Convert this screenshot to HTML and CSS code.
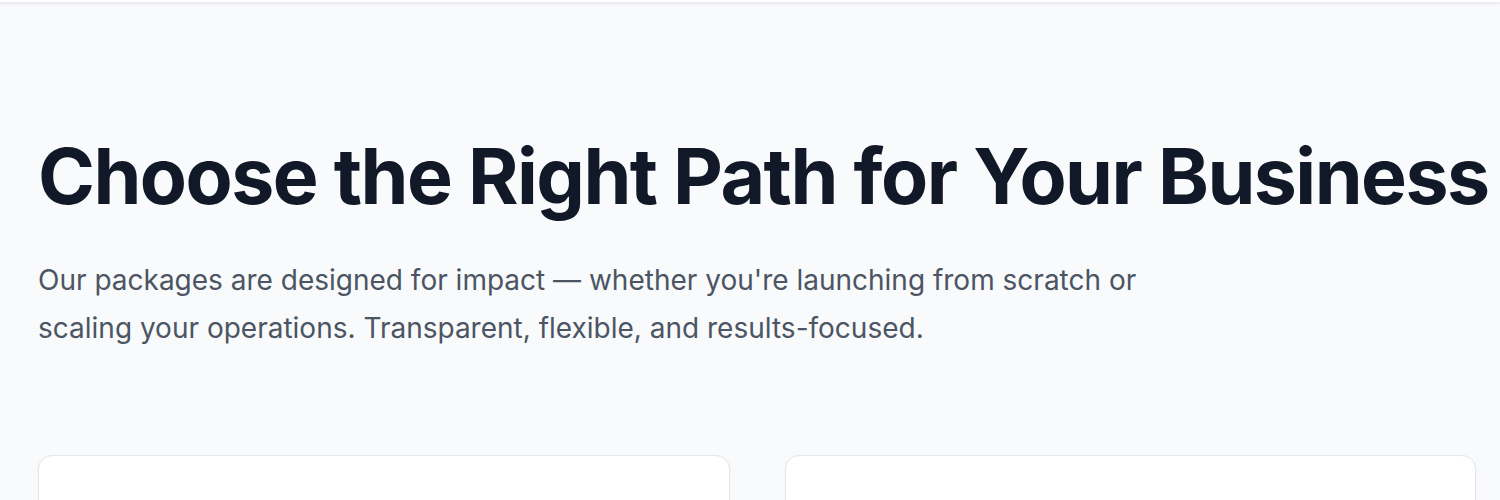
FILE: index.html
```html
<!DOCTYPE html>
<html lang="en">
<head>
  <meta charset="UTF-8" />
  <title>Packages</title>
  <meta name="viewport" content="width=device-width, initial-scale=1.0"/>
  <link rel="stylesheet" href="styles.css">
</head>
<body>

<header class="topbar"></header>

<section class="packages">
  <h1>Choose the Right Path for Your Business</h1>
  <p class="lead">Our packages are designed for impact — whether you're launching from scratch or scaling your operations. Transparent, flexible, and results-focused.</p>

  <div class="cards">
    <div class="card"></div>
    <div class="card"></div>
  </div>
</section>

</body>
</html>
```

FILE: styles.css
```css
* { box-sizing: border-box; }

body {
  margin: 0;
  font-family: Inter, 'Noto Sans', sans-serif;
  background: #f9fafb;
  color: #111827;
}

.topbar {
  height: 3px;
  background: white;
  box-shadow: 0 1px 3px rgba(0,0,0,0.08);
  border-bottom: 1px solid #eceef1;
}

.packages {
  width: 1438px;
  margin-left: 38px;
  padding-top: 131px;
}

h1 {
  margin: 0;
  font-size: 77px;
  line-height: 1.1;
  font-weight: 700;
  letter-spacing: -1.55px;
  white-space: nowrap;
  color: #111827;
}

.lead {
  margin: 37px 0 0;
  max-width: 1130px;
  font-size: 28px;
  line-height: 48px;
  color: #4b5563;
}

.cards {
  display: grid;
  grid-template-columns: 1fr 1fr;
  gap: 55px;
  margin-top: 103px;
}

.card {
  height: 300px;
  background: white;
  border: 1px solid #e5e7eb;
  border-radius: 14px;
  box-shadow: 0 1px 3px rgba(0,0,0,0.05);
}
```
